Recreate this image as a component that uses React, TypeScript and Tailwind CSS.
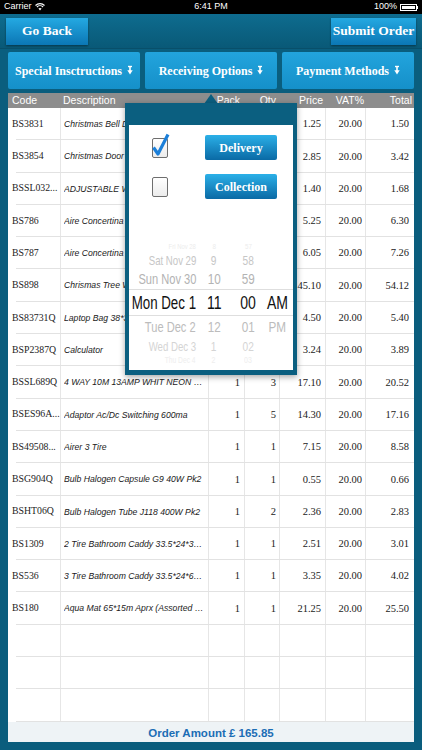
import React from 'react';

const SERIF = "font-['Liberation_Serif','Times_New_Roman',serif]";
const SANS = "font-['Liberation_Sans',Arial,sans-serif]";

const items = [
  ['BS3831', 'Christmas Bell Decoration', '1', '1', '1.25', '20.00', '1.50'],
  ['BS3854', 'Christmas Door Hanger', '1', '1', '2.85', '20.00', '3.42'],
  ['BSSL032...', 'ADJUSTABLE WALL LIGHT', '1', '1', '1.40', '20.00', '1.68'],
  ['BS786', 'Aire Concertina Small', '1', '1', '5.25', '20.00', '6.30'],
  ['BS787', 'Aire Concertina Large', '1', '1', '6.05', '20.00', '7.26'],
  ['BS898', 'Chrismas Tree With Lights', '1', '1', '45.10', '20.00', '54.12'],
  ['BS83731Q', 'Laptop Bag 38*30*8cm', '1', '1', '4.50', '20.00', '5.40'],
  ['BSP2387Q', 'Calculator', '1', '1', '3.24', '20.00', '3.89'],
  ['BSSL689Q', '4 WAY 10M 13AMP WHIT NEON EXTENSION', '1', '3', '17.10', '20.00', '20.52'],
  ['BSES96A...', 'Adaptor Ac/Dc Switching 600ma', '1', '5', '14.30', '20.00', '17.16'],
  ['BS49508...', 'Airer 3 Tire', '1', '1', '7.15', '20.00', '8.58'],
  ['BSG904Q', 'Bulb Halogen Capsule G9 40W Pk2', '1', '1', '0.55', '20.00', '0.66'],
  ['BSHT06Q', 'Bulb Halogen Tube J118 400W Pk2', '1', '2', '2.36', '20.00', '2.83'],
  ['BS1309', '2 Tire Bathroom Caddy 33.5*24*38.5cm', '1', '1', '2.51', '20.00', '3.01'],
  ['BS536', '3 Tire Bathroom Caddy 33.5*24*62.5cm', '1', '1', '3.35', '20.00', '4.02'],
  ['BS180', 'Aqua Mat 65*15m Aprx (Assorted Designs)', '1', '1', '21.25', '20.00', '25.50'],
  ['', '', '', '', '', '', ''],
  ['', '', '', '', '', '', ''],
  ['', '', '', '', '', '', ''],
];

function DownArrow() {
  return (
    <svg width="6" height="10" viewBox="0 0 6 10" className="inline-block ml-[5px] -mt-[2px]">
      <path d="M1 1.5h4" stroke="white" strokeWidth="1.4" />
      <path d="M3 1v5" stroke="white" strokeWidth="1.6" />
      <path d="M0.3 5.2h5.4L3 9.5z" fill="white" />
    </svg>
  );
}

function StatusBar() {
  return (
    <div className={`h-[14px] bg-black text-white text-[9px] flex items-center justify-between px-[4px] relative ${SANS}`}>
      <div className="flex items-center gap-[3px]">
        <span>Carrier</span>
        <svg width="10" height="8" viewBox="0 0 10 8">
          <path d="M5 7.5 L3.4 5.6 A2.4 2.4 0 0 1 6.6 5.6 Z" fill="white" />
          <path d="M1.9 4 A4.4 4.4 0 0 1 8.1 4" stroke="white" strokeWidth="1.1" fill="none" />
          <path d="M0.5 2.5 A6.4 6.4 0 0 1 9.5 2.5" stroke="white" strokeWidth="1.1" fill="none" />
        </svg>
      </div>
      <span className="absolute left-1/2 -translate-x-1/2">6:41 PM</span>
      <div className="flex items-center gap-[3px]">
        <span>100%</span>
        <div className="flex items-center">
          <div className="w-[17px] h-[7px] border border-white p-[1px]">
            <div className="w-full h-full bg-white" />
          </div>
          <div className="w-[1px] h-[3px] bg-white" />
        </div>
      </div>
    </div>
  );
}

function TopButton({ label, w }: { label: string; w: string }) {
  return (
    <div
      className={`${w} h-[27px] flex items-center justify-center text-white text-[13.5px] font-bold bg-gradient-to-b from-[#24a9e2] to-[#0b77b5] shadow-[0_1px_2px_rgba(0,0,0,0.4)] ${SERIF}`}
    >
      {label}
    </div>
  );
}

function OptionButton({ label }: { label: string }) {
  return (
    <div
      className={`w-[132px] h-[37px] rounded-[2px] flex items-center justify-center text-white text-[12px] font-bold bg-gradient-to-b from-[#22a4dd] to-[#1590c9] ${SERIF}`}
    >
      <span>{label}</span>
      <DownArrow />
    </div>
  );
}

function Row({ r }: { r: string[] }) {
  const num = `flex items-center justify-end border-l border-[#e6e6e6] text-[10.5px] text-[#222] ${SERIF}`;
  return (
    <div className="h-[32.3px] flex relative">
      <div className={`w-[52px] flex items-center pl-[4px] text-[9.8px] text-[#222] whitespace-nowrap overflow-hidden ${SERIF}`}>{r[0]}</div>
      <div className={`w-[148px] flex items-center pl-[3px] border-l border-[#e6e6e6] overflow-hidden ${SANS}`}>
        <div className="w-[155px] shrink-0 origin-left scale-x-[0.9] truncate text-[9.6px] italic text-[#1a1a1a]">{r[1]}</div>
      </div>
      <div className={`w-[36px] pr-[4px] ${num}`}>{r[2]}</div>
      <div className={`w-[35px] pr-[3px] ${num}`}>{r[3]}</div>
      <div className={`w-[46px] pr-[4px] ${num}`}>{r[4]}</div>
      <div className={`w-[40px] pr-[3px] ${num}`}>{r[5]}</div>
      <div className={`w-[49px] pr-[5px] ${num}`}>{r[6]}</div>
      <div className="absolute left-[8px] right-0 bottom-0 h-px bg-[#e2e2e2]" />
    </div>
  );
}

function Checkbox({ checked }: { checked?: boolean }) {
  return (
    <div className="relative w-[16px] h-[20px] rounded-[2px] border border-[#6e6e6e] bg-gradient-to-b from-white to-[#ececec]">
      {checked && (
        <svg width="20" height="24" viewBox="0 0 20 24" className="absolute -left-[2px] -top-[6px] overflow-visible">
          <path d="M2.5 14.5 L7 21 L17 1.5" stroke="#1b7fd9" strokeWidth="3.2" fill="none" strokeLinejoin="round" />
        </svg>
      )}
    </div>
  );
}

function PopButton({ label }: { label: string }) {
  return (
    <div
      className={`w-[72px] h-[25px] rounded-[2px] flex items-center justify-center text-white text-[12px] font-bold bg-gradient-to-b from-[#2bb0e8] to-[#0a6aa5] ${SERIF}`}
    >
      {label}
    </div>
  );
}

const pickerRows = [
  { d: 'Fri Nov 28', h: '8', m: '57', a: '', cls: 'h-[13px] text-[8px] text-[#ececec]' },
  { d: 'Sat Nov 29', h: '9', m: '58', a: '', cls: 'h-[14px] text-[13px] text-[#c6c6c6]' },
  { d: 'Sun Nov 30', h: '10', m: '59', a: '', cls: 'h-[22px] text-[15px] text-[#b3b3b3]' },
  { d: 'Mon Dec 1', h: '11', m: '00', a: 'AM', cls: 'h-[27px] text-[18px] text-[#111] border-y border-[#dedede]' },
  { d: 'Tue Dec 2', h: '12', m: '01', a: 'PM', cls: 'h-[20px] text-[15px] text-[#bcbcbc]' },
  { d: 'Wed Dec 3', h: '1', m: '02', a: '', cls: 'h-[20px] text-[13px] text-[#d4d4d4]' },
  { d: 'Thu Dec 4', h: '2', m: '03', a: '', cls: 'h-[7px] text-[9px] text-[#eeeeee] items-start' },
];

function Picker() {
  return (
    <div className={`mt-[41px] flex flex-col ${SANS}`}>
      {pickerRows.map((p) => (
        <div key={p.d} className={`flex items-center leading-none overflow-hidden ${p.cls}`}>
          <div className="w-[67px] flex justify-end whitespace-nowrap">
            <span className="inline-block origin-right scale-x-[0.74]">{p.d}</span>
          </div>
          <div className="ml-[5px] w-[26px] flex justify-center">
            <span className="inline-block scale-x-[0.78]">{p.h}</span>
          </div>
          <div className="ml-[8px] w-[26px] flex justify-center">
            <span className="inline-block scale-x-[0.78]">{p.m}</span>
          </div>
          <div className="ml-[3px] w-[26px] flex justify-center">
            <span className="inline-block scale-x-[0.78]">{p.a}</span>
          </div>
        </div>
      ))}
    </div>
  );
}

function Popover() {
  return (
    <>
      <div className="absolute left-[204px] top-[94px] w-0 h-0 border-x-[7px] border-x-transparent border-b-[10px] border-b-[#0b5f80]" />
      <div className="absolute left-[125px] top-[103px] w-[172px] h-[272px] bg-[#0b5f80] pt-[22px] px-[4px] pb-[5px] shadow-[0_2px_6px_rgba(0,0,0,0.35)]">
        <div className="w-full h-full bg-white overflow-hidden flex flex-col">
          <div className="pt-[10px] flex flex-col gap-[14px]">
            <div className="flex items-center h-[25px]">
              <div className="ml-[23px]">
                <Checkbox checked />
              </div>
              <div className="ml-[37px]">
                <PopButton label="Delivery" />
              </div>
            </div>
            <div className="flex items-center h-[25px]">
              <div className="ml-[23px]">
                <Checkbox />
              </div>
              <div className="ml-[37px]">
                <PopButton label="Collection" />
              </div>
            </div>
          </div>
          <Picker />
        </div>
      </div>
    </>
  );
}

export default function App() {
  return (
    <div className="w-[422px] h-[750px] bg-[#0a5d7d] flex flex-col overflow-hidden relative">
      <StatusBar />
      <div className="h-[34px] flex items-center justify-between px-[6px] bg-gradient-to-b from-[#0e6c8f] to-[#095977]">
        <TopButton label="Go Back" w="w-[82px]" />
        <TopButton label="Submit Order" w="w-[85px]" />
      </div>
      <div className="h-[42px] pt-[3px] pl-[8px] flex items-start gap-[5px] bg-[#0a5e7e] border-t border-[#084f6a]">
        <OptionButton label="Special Insctructions" />
        <OptionButton label="Receiving Options" />
        <OptionButton label="Payment Methods" />
      </div>
      <div className="mx-[8px] mt-[3px] flex-1 bg-white flex flex-col min-h-0">
        <div className={`h-[15px] bg-[#8d8d8d] flex text-white text-[10.5px] leading-none items-center ${SANS}`}>
          <div className="w-[52px] pl-[4px]">Code</div>
          <div className="w-[148px] pl-[3px]">Description</div>
          <div className="w-[36px] text-right pr-[4px]">Pack</div>
          <div className="w-[35px] text-right pr-[3px]">Qty</div>
          <div className="w-[46px] text-right pr-[2px]">Price</div>
          <div className="w-[40px] text-right pr-[1px]">VAT%</div>
          <div className="w-[49px] text-right pr-[2px]">Total</div>
        </div>
        <div className="flex-1 flex flex-col overflow-hidden">
          {items.map((r, i) => (
            <Row key={i} r={r} />
          ))}
        </div>
        <div className={`h-[20px] pt-[3px] bg-[#eef3f6] flex items-center justify-center text-[#1b6db5] text-[11.5px] font-bold ${SANS}`}>
          Order Amount £ 165.85
        </div>
      </div>
      <div className="h-[8px]" />
      <Popover />
    </div>
  );
}
